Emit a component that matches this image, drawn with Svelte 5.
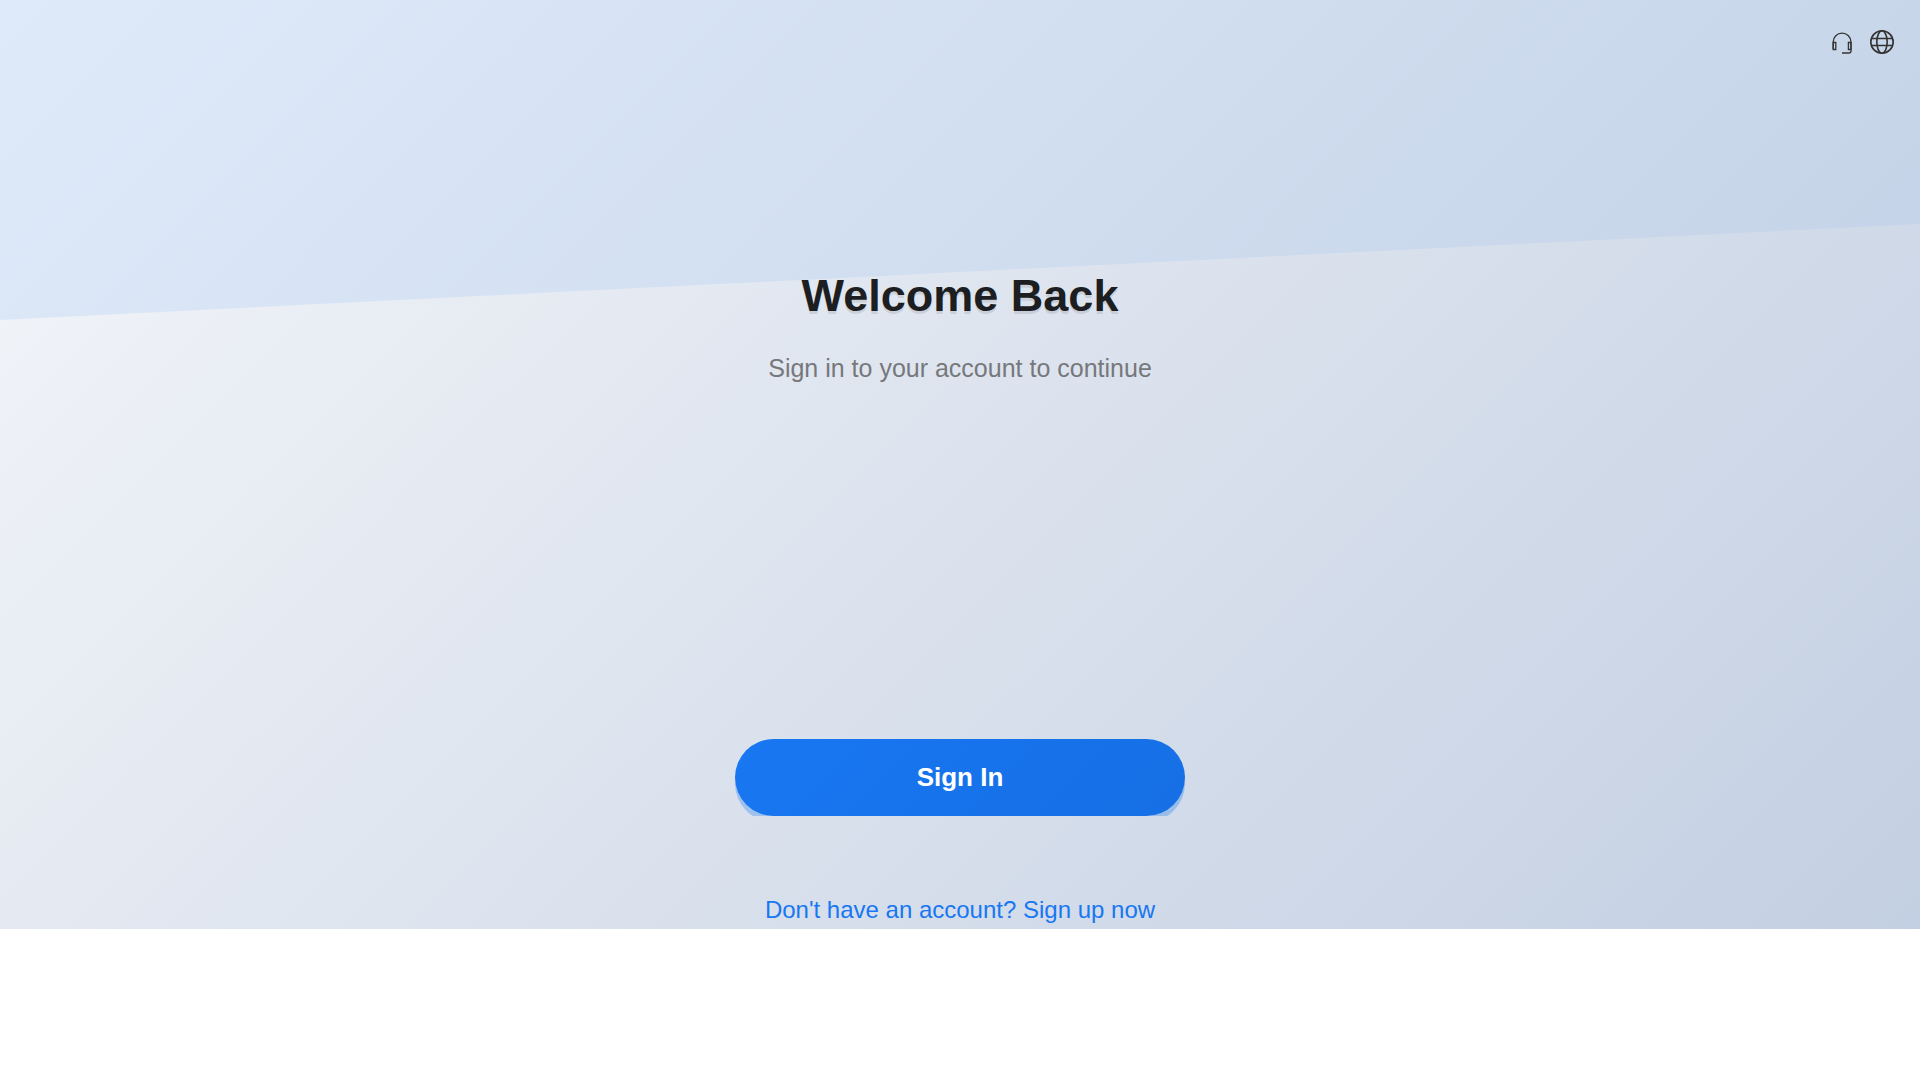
<script>
  function signIn(event) {
    event.preventDefault();
  }
</script>

<main class="page">
  <header class="toolbar">
    <button class="icon-button" type="button" aria-label="Customer support">
      <svg viewBox="0 0 24 24" width="24" height="24" fill="none" stroke="#333" stroke-width="1.3">
        <path d="M3.2 19V12a8.900 8.900 0 0 1 17.800 0V21a2 2 0 0 1-2 2H12" />
        <path d="M3.200 12.500h2.600v7H3.200zM18.400 12.500h2.600v7h-2.600z" />
      </svg>
    </button>
    <button class="icon-button" type="button" aria-label="Language">
      <svg viewBox="0 0 24 24" width="24" height="24" fill="none" stroke="#333" stroke-width="1.6">
        <circle cx="12" cy="12" r="11.200" />
        <ellipse cx="12" cy="12" rx="5.200" ry="11.200" />
        <path d="M1.500 8.500h21M1.500 15.500h21" />
      </svg>
    </button>
  </header>

  <section class="intro">
    <h1>Welcome Back</h1>
    <p>Sign in to your account to continue</p>
  </section>

  <form class="actions" onsubmit={signIn}>
    <div class="button-frame">
      <button class="primary" type="submit">Sign In</button>
    </div>
    <a class="signup" href="#signup">Don't have an account? Sign up now</a>
  </form>
</main>

<style>
  :global(body) {
    margin: 0;
    background: #fff;
  }

  .page {
    position: relative;
    display: flex;
    flex-direction: column;
    align-items: center;
    background: linear-gradient(135deg, #f5f7fa 0%, #c3cfe2 100%);
    font-family: "Liberation Sans", Arial, sans-serif;
  }

  /* Slanted tint behind the heading */
  .page::before {
    content: "";
    position: absolute;
    inset: 0 0 auto;
    height: 320px;
    background: linear-gradient(135deg, rgba(24, 119, 242, 0.1), rgba(24, 119, 242, 0.05));
    clip-path: polygon(0 0, 100% 0, 100% 70%, 0 100%);
  }

  .toolbar,
  .intro,
  .actions {
    position: relative;
  }

  .toolbar {
    display: flex;
    align-self: stretch;
    justify-content: flex-end;
    gap: 16px;
    padding: 30px 26px;
  }

  .icon-button {
    display: flex;
    padding: 0;
    border: 0;
    background: none;
    cursor: pointer;
  }

  .intro {
    padding: 184px 24px 0;
    text-align: center;
  }

  h1 {
    margin: 0;
    color: #1c1e21;
    font-size: 45px;
    line-height: 56px;
    text-shadow: 0 3px 0 rgba(0, 0, 0, 0.1);
  }

  p {
    margin: 28px 0 0;
    color: #76787c;
    font-size: 25px;
    line-height: 32px;
  }

  .actions {
    display: flex;
    flex-direction: column;
    align-items: center;
    box-sizing: border-box;
    width: 100%;
    max-width: 450px;
    margin-top: 355px;
  }

  .button-frame {
    width: 100%;
    overflow: hidden;
  }

  .primary {
    display: block;
    width: 100%;
    height: 77px;
    padding: 0;
    border: 0;
    border-radius: 40px;
    background: linear-gradient(135deg, #1877f2, #166fe5);
    box-shadow: 0 6px 0 rgba(24, 119, 242, 0.3);
    color: #fff;
    font: bold 26px/77px "Liberation Sans", Arial, sans-serif;
    cursor: pointer;
  }

  .signup {
    margin-top: 80px;
    padding-bottom: 5px;
    color: #1877f2;
    font-size: 24px;
    line-height: 28px;
    text-decoration: none;
  }
</style>
